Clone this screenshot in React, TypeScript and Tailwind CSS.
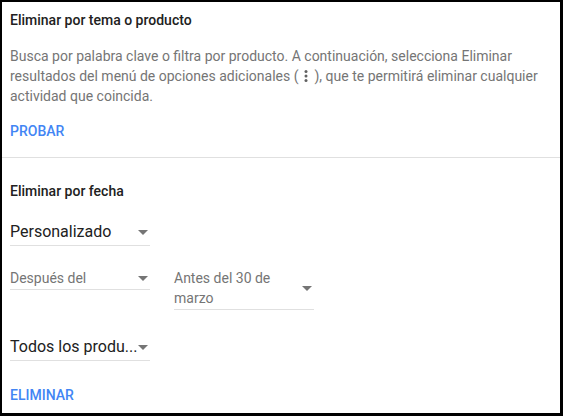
import React from "react";

const Arrow = () => (
  <svg width="10" height="5" viewBox="0 0 10 5" className="shrink-0">
    <path d="M0 0 L10 0 L5 5 Z" fill="#757575" />
  </svg>
);

const Dots = () => (
  <svg width="4" height="12" viewBox="0 0 4 12" className="inline-block align-[-1px] mx-[6px]">
    <circle cx="2" cy="1.6" r="1.5" fill="#616161" />
    <circle cx="2" cy="6" r="1.5" fill="#616161" />
    <circle cx="2" cy="10.4" r="1.5" fill="#616161" />
  </svg>
);

export default function App() {
  return (
    <div className="w-[563px] h-[416px] bg-black pl-[2px] pt-[2px] pr-[3px] pb-[3px]" style={{ fontFamily: "Roboto, 'Noto Sans', sans-serif" }}>
      <div className="w-full h-full bg-white flex flex-col">
        <div className="px-[8px] pt-[8px] pb-[16px]">
          <div className="text-[14px] leading-[20px] font-medium text-[#212121]">Eliminar por tema o producto</div>
          <div className="mt-[16px] text-[14px] leading-[20px] text-[#757575]">
            Busca por palabra clave o filtra por producto. A continuación, selecciona Eliminar resultados del menú de opciones adicionales (<Dots />), que te permitirá eliminar cualquier actividad que coincida.
          </div>
          <div className="mt-[15px] text-[14px] leading-[20px] font-medium text-[#4285f4]">PROBAR</div>
        </div>
        <div className="h-px bg-[#e0e0e0]" />
        <div className="px-[8px] pt-[23px]">
          <div className="text-[14px] leading-[20px] font-medium text-[#212121]">Eliminar por fecha</div>
          <div className="mt-[20px] w-[140px] flex items-center justify-between border-b border-[#e0e0e0] pb-[2px]">
            <span className="text-[16px] leading-[22px] text-[#212121]">Personalizado</span>
            <span className="pr-[2px]"><Arrow /></span>
          </div>
          <div className="mt-[22px] flex items-start gap-[24px]">
            <div className="w-[140px] flex items-center justify-between border-b border-[#e0e0e0] pb-[1px]">
              <span className="text-[14px] leading-[20px] text-[#757575]">Después del</span>
              <span className="pr-[2px]"><Arrow /></span>
            </div>
            <div className="w-[140px] flex items-center justify-between border-b border-[#e0e0e0] pb-[1px]">
              <span className="text-[14px] leading-[20px] text-[#757575] w-[120px]">Antes del 30 de marzo</span>
              <span className="pr-[2px]"><Arrow /></span>
            </div>
          </div>
          <div className="mt-[26px] w-[140px] flex items-center justify-between border-b border-[#e0e0e0] pb-[2px]">
            <span className="text-[16px] leading-[22px] text-[#212121]">Todos los produ...</span>
            <span className="pr-[2px]"><Arrow /></span>
          </div>
          <div className="mt-[24px] text-[14px] leading-[20px] font-medium text-[#4285f4]">ELIMINAR</div>
        </div>
      </div>
    </div>
  );
}
